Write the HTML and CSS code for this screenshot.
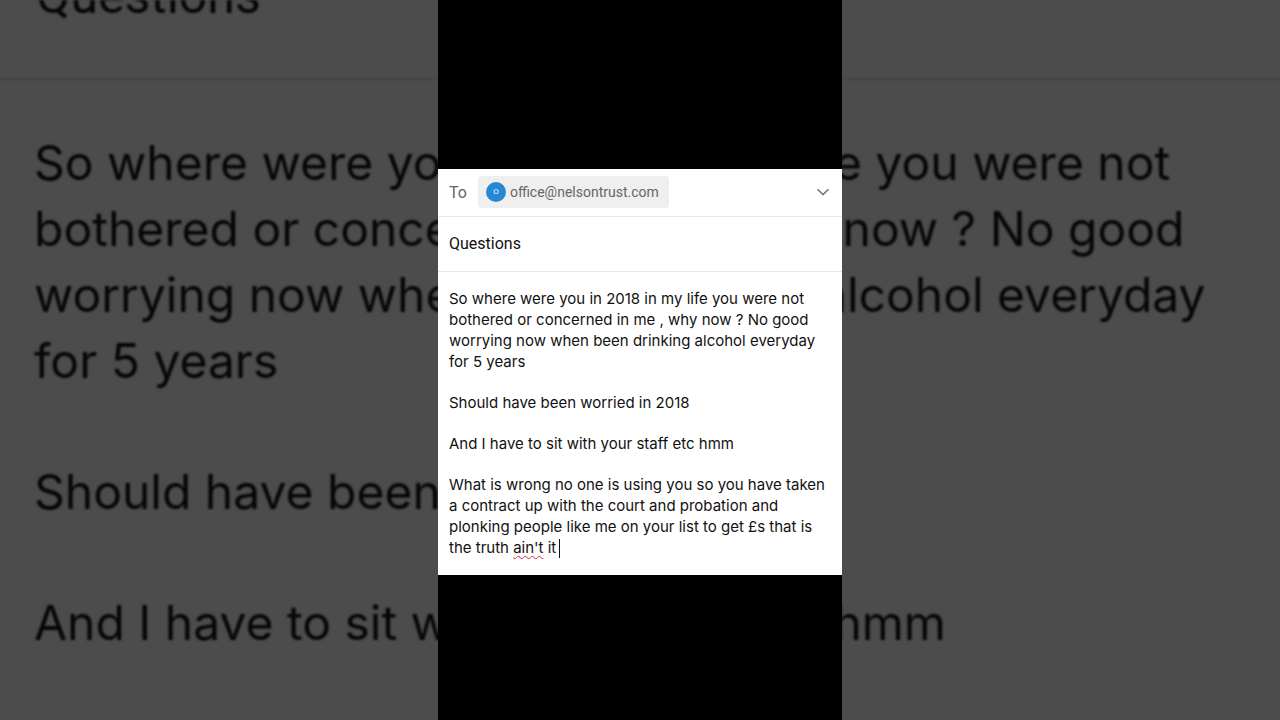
FILE: index.html
```
<!DOCTYPE html>
<html lang="en">
<head>
  <meta charset="utf-8">
  <title>Questions</title>
  <link rel="stylesheet" href="styles.css">
</head>
<body>
  <div class="stage">
    <!-- enlarged, dimmed copy of the mail behind the phone -->
    <div class="backdrop" aria-hidden="true">
      <div class="backdrop-subject">Questions</div>
      <div class="backdrop-message">
        <p>So where were you in 2018 in my life you were not<br>
        bothered or concerned in me , why now ? No good<br>
        worrying now when been drinking alcohol everyday<br>
        for 5 years</p>
        <p>Should have been worried in 2018</p>
        <p>And I have to sit with your staff etc hmm</p>
      </div>
    </div>

    <main class="phone">
      <form class="mail">
        <div class="to-row">
          <span class="to-label">To</span>
          <button type="button" class="chip">
            <span class="avatar">O</span>
            <span>office@nelsontrust.com</span>
          </button>
          <button type="button" class="expand" aria-label="Show Cc and Bcc">
            <svg width="14" height="8" viewBox="0 0 14 8">
              <path d="M1.5 1.2 L7 6.6 L12.5 1.2" fill="none" stroke="#777" stroke-width="1.6"/>
            </svg>
          </button>
        </div>
        <input type="text" class="subject" value="Questions" aria-label="Subject">
        <div class="message" contenteditable="true" spellcheck="false" role="textbox" aria-multiline="true" aria-label="Message">
          <p>So where were you in 2018 in my life you were not<br>
          bothered or concerned in me , why now ? No good<br>
          worrying now when been drinking alcohol everyday<br>
          for 5 years</p>
          <p>Should have been worried in 2018</p>
          <p>And I have to sit with your staff etc hmm</p>
          <p>What is wrong no one is using you so you have taken<br>
          a contract up with the court and probation and<br>
          plonking people like me on your list to get £s that is<br>
          the truth <span class="misspelt">ain't</span> it<span class="caret"></span></p>
        </div>
      </form>
    </main>
  </div>
</body>
</html>
```
FILE: styles.css
```
* {
  box-sizing: border-box;
}

body {
  margin: 0;
  background-color: #000;
  font-family: Roboto, sans-serif;
}

p {
  margin: 0;
}

.stage {
  position: relative;
  display: flex;
  justify-content: center;
  min-height: 100vh;
  overflow: hidden;
  background-color: #4c4c4c;
}

/* backdrop */
.backdrop {
  position: absolute;
  top: 0;
  left: 0;
  right: 0;
  bottom: 0;
  overflow: hidden;
  color: #060606;
  white-space: nowrap;
  filter: blur(1px);
}

.backdrop-subject {
  display: flex;
  align-items: flex-end;
  height: 80px;
  padding: 0 36px 52px;
  border-bottom: 2px solid #444;
  font-size: 50px;
  line-height: 60px;
}

.backdrop-message {
  padding: 50px 34px;
  font-family: Inter, sans-serif;
  font-size: 48px;
  line-height: 66px;
}

.backdrop-message p {
  margin-bottom: 65px;
}

/* phone */
.phone {
  position: relative;
  display: flex;
  flex-direction: column;
  justify-content: center;
  width: 100%;
  max-width: 404px;
  padding-top: 24px;
  background-color: #000;
}

.mail {
  background-color: #fff;
}

.to-row {
  display: flex;
  align-items: center;
  height: 48px;
  padding: 0 12px 0 11px;
  border-bottom: 1px solid #e8e8e8;
  color: #666;
  font-size: 16px;
}

.chip {
  display: flex;
  align-items: center;
  gap: 4px;
  height: 32px;
  margin-left: 11px;
  padding: 0 10px 0 8px;
  border: none;
  border-radius: 4px;
  background-color: #efefef;
  color: #666;
  font-family: inherit;
  font-size: 14px;
}

.avatar {
  width: 20px;
  height: 20px;
  border-radius: 50%;
  background-color: #2488d4;
  color: #fff;
  font-size: 8px;
  line-height: 20px;
  text-align: center;
}

.expand {
  display: flex;
  margin-left: auto;
  padding: 0;
  border: none;
  background: none;
}

.subject {
  display: block;
  width: 100%;
  height: 55px;
  padding: 0 11px;
  border: none;
  border-bottom: 1px solid #e8e8e8;
  color: #111;
  font-family: inherit;
  font-size: 16px;
  outline: none;
}

.message {
  padding: 16px 11px 17px;
  color: #111;
  font-family: Inter, sans-serif;
  font-size: 15px;
  line-height: 21px;
  white-space: nowrap;
  outline: none;
}

.message p + p {
  margin-top: 20px;
}

.misspelt {
  text-decoration: underline wavy #c8323c 1px;
  text-underline-offset: 2px;
  text-decoration-skip-ink: none;
}

.caret {
  display: inline-block;
  width: 1px;
  height: 19px;
  margin-left: 3px;
  background-color: #111;
  vertical-align: middle;
}
```
